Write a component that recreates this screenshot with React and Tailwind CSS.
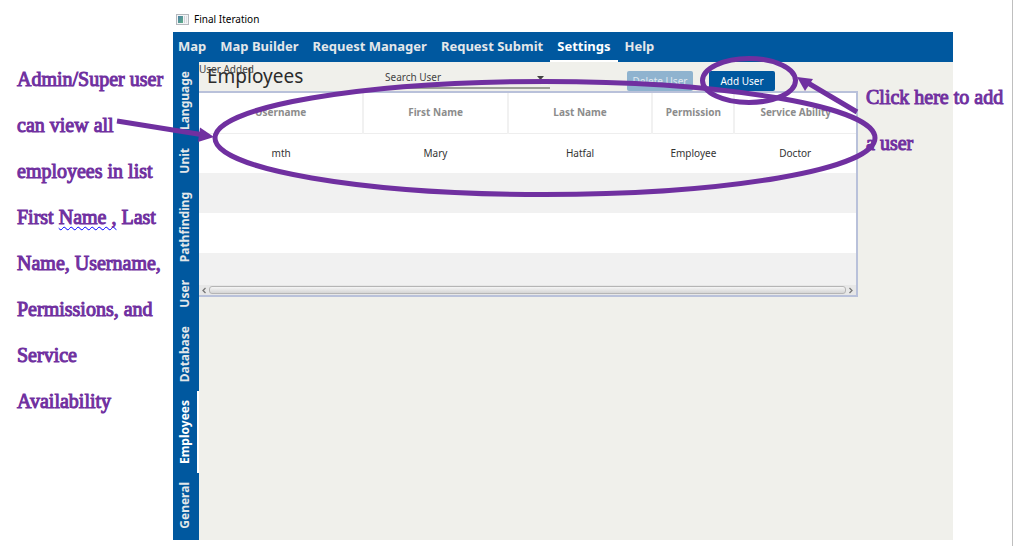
const menuItems = ["Map", "Map Builder", "Request Manager", "Request Submit", "Settings", "Help"];
const sideTabs = ["Language", "Unit", "Pathfinding", "User", "Database", "Employees", "General"];
const columns = [
  { name: "Username", width: "w-[25%]" },
  { name: "First Name", width: "w-[22%]" },
  { name: "Last Name", width: "w-[22%]" },
  { name: "Permission", width: "w-[12.5%]" },
  { name: "Service Ability", width: "w-[18.5%]" },
];
const employee = ["mth", "Mary", "Hatfal", "Employee", "Doctor"];

function WindowIcon() {
  return (
    <svg width="13" height="11" viewBox="0 0 13 11" aria-hidden="true">
      <defs>
        <linearGradient id="pane" x1="0" y1="0" x2="1" y2="1">
          <stop offset="0" stopColor="#4a7fa5" />
          <stop offset="1" stopColor="#5fae86" />
        </linearGradient>
      </defs>
      <rect x="0.5" y="0.5" width="12" height="10" fill="#f3f4f6" stroke="#b4b8bd" />
      <rect x="2" y="2" width="5" height="7" fill="url(#pane)" />
      <rect x="8" y="2" width="1" height="7" fill="#cfd3d8" />
      <rect x="10" y="2" width="1" height="7" fill="#dde0e4" />
    </svg>
  );
}

function TitleBar() {
  return (
    <header className="flex h-8 items-center gap-[5px] pt-[7px] pl-[3px]">
      <WindowIcon />
      <h1 className="text-[10px] text-black">Final Iteration</h1>
    </header>
  );
}

function MenuBar() {
  return (
    <nav className="flex h-[30px] bg-[#00589f] pr-2 text-[13px] font-bold text-[#e3e7ea]">
      {menuItems.map((item) => (
        <button
          key={item}
          type="button"
          className={
            item === "Settings"
              ? "border-b-2 border-white px-[7px] pt-[2px] whitespace-nowrap text-white"
              : "border-b-2 border-transparent px-[7px] pt-[2px] whitespace-nowrap first:pl-[5px]"
          }
        >
          {item}
        </button>
      ))}
    </nav>
  );
}

function SideTabs() {
  return (
    <nav className="flex w-[26px] shrink-0 flex-col bg-[#00589f] text-[12px] font-bold text-[#e3e7ea]">
      {sideTabs.map((tab) => (
        <button
          key={tab}
          type="button"
          className={
            tab === "Employees"
              ? "flex w-full justify-center border-r-2 border-white py-[9px] text-white"
              : "flex w-full justify-center border-r-2 border-transparent py-[9px]"
          }
        >
          <span className="rotate-180 leading-4 [writing-mode:vertical-rl]">{tab}</span>
        </button>
      ))}
    </nav>
  );
}

function Toolbar() {
  return (
    <div className="relative flex h-[29px] items-start pl-[8px]">
      <p className="absolute top-0 left-0 text-[10px] leading-[14px] text-[#444]">User Added</p>
      <h2 className="w-[178px] text-[19px] leading-[29px] text-[#2b2b2b]">Employees</h2>
      <div className="relative mt-[6px] w-[165px]">
        <select
          aria-label="Search User"
          className="block h-[21px] w-full appearance-none border-b-2 border-[#9c9f97] bg-transparent text-[10px] text-[#444]"
        >
          <option>Search User</option>
        </select>
        <svg className="pointer-events-none absolute top-[8px] right-[6px]" width="7" height="4" viewBox="0 0 7 4" aria-hidden="true">
          <path d="M0 0H7L3.500 4Z" fill="#444" />
        </svg>
      </div>
      <button type="button" disabled className="mt-[9px] ml-[77px] h-5 w-[66px] rounded-[2px] bg-[#8fb3cf] text-[10px] text-[#dfe8ef]">
        Delete User
      </button>
      <button type="button" className="mt-[9px] ml-4 h-5 w-[66px] rounded-[2px] bg-[#00589f] text-[10px] text-white">
        Add User
      </button>
    </div>
  );
}

function EmployeeTable() {
  return (
    <div className="mr-[95px] border-2 border-l-0 border-[#b9c1da] bg-white">
      <table className="w-full table-fixed border-collapse text-center text-[10px]">
        <thead>
          <tr className="h-10 border-b border-[#eeeeee] text-[#8c8c8c]">
            {columns.map((column) => (
              <th key={column.name} scope="col" className={`${column.width} border-r-2 border-[#f1f1f1] p-0 font-bold last:border-r-0`}>
                {column.name}
              </th>
            ))}
          </tr>
        </thead>
        <tbody className="text-[#333]">
          <tr className="h-10">
            {employee.map((value) => (
              <td key={value} className="p-0">{value}</td>
            ))}
          </tr>
          <tr className="h-10 bg-[#f1f1f1]"><td colSpan={5} /></tr>
          <tr className="h-10"><td colSpan={5} /></tr>
          <tr className="h-8 bg-[#f1f1f1]"><td colSpan={5} /></tr>
        </tbody>
      </table>
      <div className="flex h-[10px] items-center gap-[2px] bg-[#e7e7e7] px-[2px]" aria-hidden="true">
        <svg width="6" height="7" viewBox="0 0 6 7"><path d="M4.500 1L2 3.500L4.500 6" fill="none" stroke="#777" strokeWidth="1.300" /></svg>
        <div className="h-2 flex-1 rounded-[3px] border border-[#b5b5b5] bg-linear-to-b from-[#f5f5f5] to-[#d5d5d5]" />
        <svg width="6" height="7" viewBox="0 0 6 7"><path d="M1.500 1L4 3.500L1.500 6" fill="none" stroke="#777" strokeWidth="1.300" /></svg>
      </div>
    </div>
  );
}

function Annotations() {
  return (
    <svg className="pointer-events-none absolute top-0 left-0" width="1013" height="546" viewBox="0 0 1013 546" aria-hidden="true">
      <g fill="none" stroke="#7030a0" strokeWidth="5">
        <ellipse cx="545" cy="138" rx="330" ry="56.500" />
        <ellipse cx="749" cy="80.500" rx="46.500" ry="22" />
        <path d="M117 121L201 134.500" />
        <path d="M857 112L808 83" />
      </g>
      <g fill="#7030a0">
        <path d="M214 137L198 142L200 127.500Z" />
        <path d="M797 77L813 79L805 91Z" />
      </g>
    </svg>
  );
}

export default function App() {
  return (
    <div className="relative flex min-h-screen bg-white font-['Noto_Sans','Open_Sans',sans-serif]">
      <aside className="w-[173px] shrink-0 pt-[56px] pl-[17px] font-['Liberation_Serif',serif] text-[20px] leading-[46px] whitespace-nowrap text-[#7030a0] [-webkit-text-stroke:1px_#7030a0]">
        <p>
          Admin/Super user<br />
          can view all<br />
          employees in list<br />
          First{" "}
          <span className="underline decoration-[#0000ff] decoration-wavy decoration-1 underline-offset-2 [text-decoration-skip-ink:none]">Name ,</span>
          {" "}Last<br />
          Name, Username,<br />
          Permissions, and<br />
          Service<br />
          Availability
        </p>
      </aside>
      <main className="mb-[6px] flex min-w-0 flex-1 flex-col">
        <TitleBar />
        <MenuBar />
        <div className="flex flex-1 bg-[#f0f0eb]">
          <SideTabs />
          <section className="min-w-0 flex-1">
            <Toolbar />
            <EmployeeTable />
          </section>
        </div>
      </main>
      <aside className="relative w-[60px] shrink-0 border-r border-[#bfbfbf]">
        <p className="absolute top-[74px] right-[8px] w-[138px] font-['Liberation_Serif',serif] text-[20px] leading-[46px] whitespace-nowrap text-[#7030a0] [-webkit-text-stroke:1px_#7030a0]">
          Click here to add<br />a user
        </p>
      </aside>
      <Annotations />
    </div>
  );
}
